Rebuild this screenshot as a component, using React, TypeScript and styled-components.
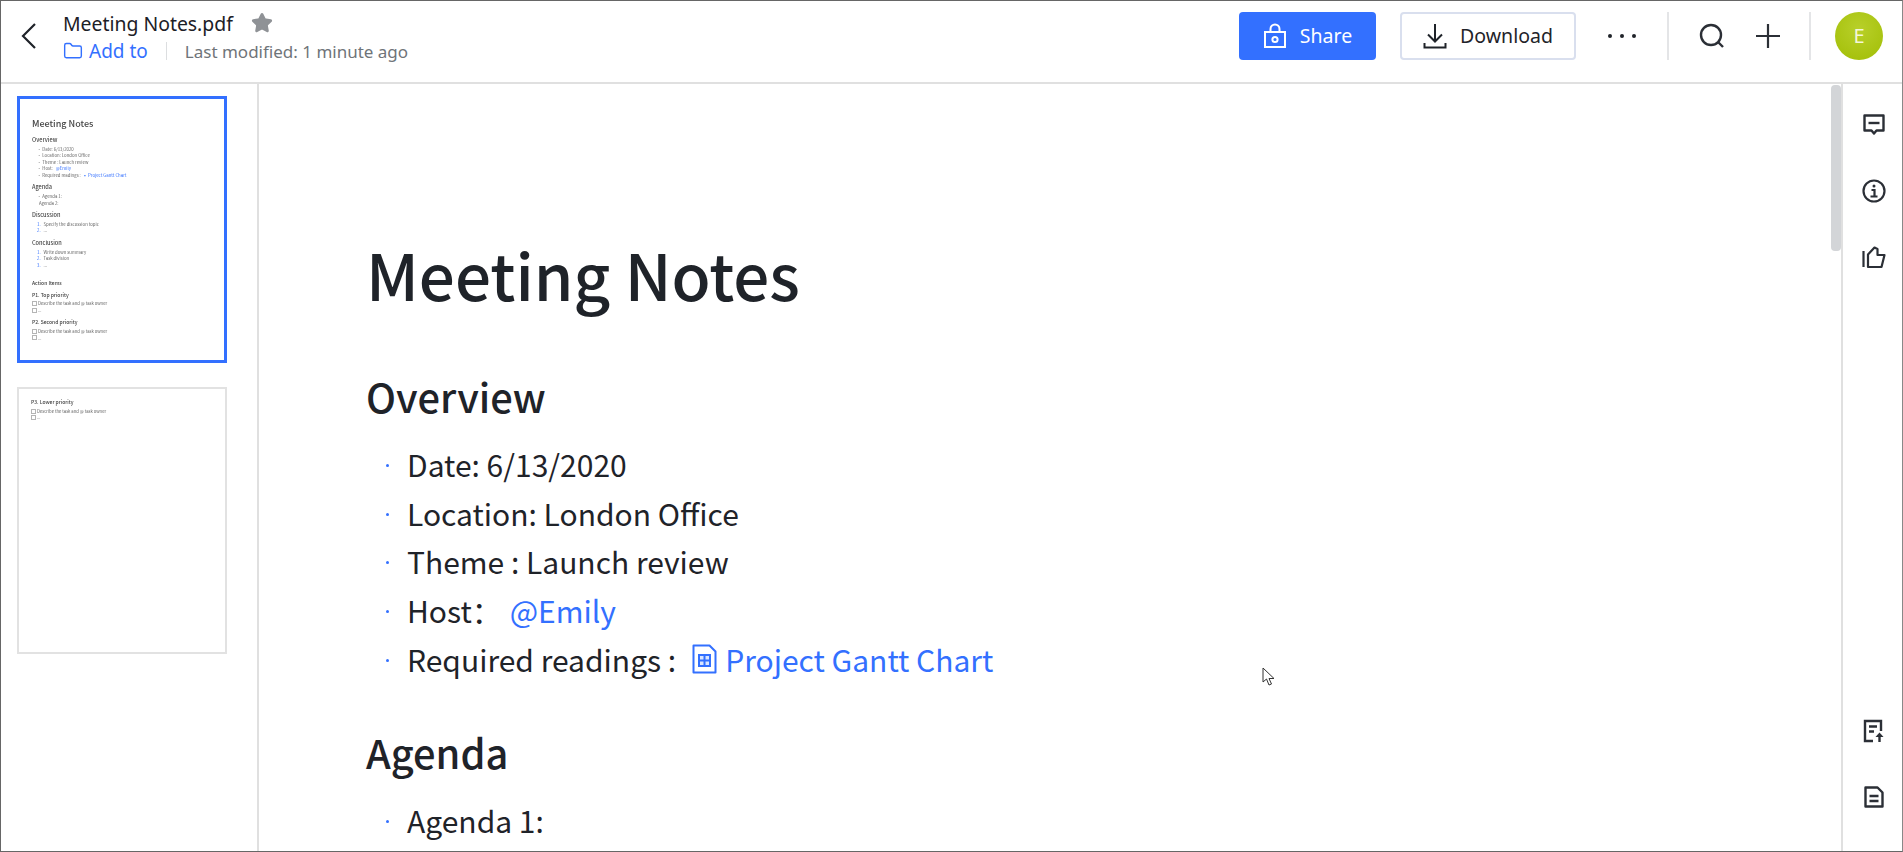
import styled, { createGlobalStyle } from 'styled-components';
import { Folder, Star } from 'lucide-react';

const GlobalStyle = createGlobalStyle`
  html, body {
    margin: 0;
    padding: 0;
    background: #fff;
  }
  * {
    box-sizing: border-box;
  }
`;

const DOC_FONT = `"Noto Sans CJK SC", "Noto Sans", sans-serif`;
const UI_FONT = `"Noto Sans", "Open Sans", sans-serif`;
const BLUE = '#3370ff';
const INK = '#1f2329';

const Frame = styled.div`
  width: 1903px;
  height: 852px;
  border: 1px solid #666;
  border-right-color: #888;
  display: flex;
  flex-direction: column;
  overflow: hidden;
  position: relative;
  font-family: ${UI_FONT};
  color: ${INK};
`;

const Header = styled.header`
  height: 83px;
  flex: none;
  border-bottom: 2px solid #e0e0e0;
  display: flex;
  align-items: center;
  justify-content: space-between;
  padding: 0 19px 12px 20px;
`;

const HeaderLeft = styled.div`
  display: flex;
  align-items: center;
`;

const HeaderRight = styled.div`
  display: flex;
  align-items: center;
`;

const BackButton = styled.div`
  width: 42px;
  display: flex;
  color: ${INK};
`;

const FileInfo = styled.div`
  display: flex;
  flex-direction: column;
  padding-top: 3px;
`;

const TitleRow = styled.div`
  display: flex;
  align-items: center;
  gap: 18px;
  height: 28px;
`;

const FileName = styled.span`
  font-size: 19.4px;
  color: #1c2026;
`;

const MetaRow = styled.div`
  display: flex;
  align-items: center;
  height: 28px;
`;

const AddTo = styled.span`
  display: flex;
  align-items: center;
  gap: 6px;
  color: ${BLUE};
  font-size: 19px;
  padding-right: 18px;
  border-right: 1px solid #dcdee0;
  height: 18px;
`;

const Modified = styled.span`
  font-size: 17px;
  color: #6f7479;
  margin-left: 18px;
`;

const ActionButton = styled.button<{ $primary?: boolean; $width: number }>`
  width: ${(p) => p.$width}px;
  height: 48px;
  border-radius: 4px;
  border: ${(p) => (p.$primary ? 'none' : '2px solid #d9dfee')};
  background: ${(p) => (p.$primary ? BLUE : '#fff')};
  color: ${(p) => (p.$primary ? '#fff' : INK)};
  font-family: ${UI_FONT};
  font-size: 19.5px;
  display: flex;
  align-items: center;
  justify-content: center;
  gap: 13px;
  padding: 0;
  margin-right: 24px;
`;

const Dots = styled.div`
  display: flex;
  gap: 8px;
  width: 67px;
  padding-left: 8px;
  span {
    width: 4px;
    height: 4px;
    border-radius: 50%;
    background: ${INK};
  }
`;

const Divider = styled.div<{ $after: number }>`
  width: 2px;
  height: 48px;
  background: #e4e5e7;
  margin-right: ${(p) => p.$after}px;
`;

const HeadIcon = styled.div<{ $after: number }>`
  display: flex;
  color: #2b2f36;
  margin-right: ${(p) => p.$after}px;
`;

const Avatar = styled.div`
  width: 48px;
  height: 48px;
  border-radius: 50%;
  background: radial-gradient(circle at 50% 35%, #b8d02a, #a7c20e 75%);
  color: #f4f7d8;
  font-size: 20px;
  display: flex;
  align-items: center;
  justify-content: center;
`;

const Body = styled.div`
  flex: 1;
  min-height: 0;
  display: flex;
`;

const Sidebar = styled.aside`
  width: 258px;
  flex: none;
  border-right: 2px solid #e0e0e0;
  padding: 12px 0 0 16px;
  display: flex;
  flex-direction: column;
  gap: 24px;
`;

const Thumb = styled.div<{ $active?: boolean }>`
  width: 210px;
  height: 267px;
  border: ${(p) => (p.$active ? `3px solid ${BLUE}` : '2px solid #e2e2e2')};
  padding: ${(p) => (p.$active ? '19px 0 0 12px' : '8px 0 0 12px')};
  font-family: ${DOC_FONT};
  color: #444;
  overflow: hidden;
  background: #fff;
`;

const ThumbPage = styled.div`
  filter: blur(0.35px);
`;

const ThumbTitle = styled.div`
  font-size: 9px;
  font-weight: 500;
  line-height: 12px;
  margin-bottom: 5px;
`;

const ThumbHeading = styled.div<{ $top?: number; $size?: number }>`
  font-size: ${(p) => p.$size ?? 5.6}px;
  font-weight: 500;
  line-height: 10px;
  margin-top: ${(p) => p.$top ?? 4.1}px;
  margin-bottom: 0.75px;
`;

const ThumbLine = styled.div<{ $check?: boolean }>`
  font-size: ${(p) => (p.$check ? 4.2 : 4.3)}px;
  height: 6.5px;
  line-height: 6.5px;
  padding-left: ${(p) => (p.$check ? 0 : 5)}px;
  white-space: pre;
  color: #666;
  display: flex;
  align-items: center;
  gap: 1px;
`;

const ThumbBox = styled.span`
  width: 5px;
  height: 5px;
  border: 1px solid #b5b5b5;
  flex: none;
`;

const ThumbLink = styled.span`
  color: ${BLUE};
`;

const Doc = styled.main`
  flex: 1;
  min-width: 0;
  padding: 147px 0 0 107px;
  font-family: ${DOC_FONT};
  color: ${INK};
  overflow: hidden;
`;

const H1 = styled.h1`
  margin: 0 0 51px;
  font-size: 63.7px;
  line-height: 84px;
  font-weight: 500;
`;

const H2 = styled.h2`
  margin: 0 0 14px;
  font-size: 39.8px;
  line-height: 60px;
  font-weight: 500;
`;

const Items = styled.ul`
  margin: 0 0 39px;
  padding: 0;
  list-style: none;
`;

const Item = styled.li`
  display: flex;
  align-items: center;
  height: 48.6px;
  font-size: 30px;
  padding-left: 20px;
  white-space: pre;
`;

const Dot = styled.span`
  width: 3px;
  height: 3px;
  border-radius: 50%;
  background: ${BLUE};
  margin: 3px 18px 0 0;
`;

const DocLink = styled.span<{ $left: number }>`
  color: ${BLUE};
  display: inline-flex;
  align-items: center;
  gap: 8px;
  margin-left: ${(p) => p.$left}px;
`;

const ScrollTrack = styled.div`
  width: 10px;
  flex: none;
  padding-top: 1px;
`;

const ScrollThumb = styled.div`
  height: 166px;
  border-radius: 4px;
  background: #d3d5d8;
`;

const Rail = styled.aside`
  width: 61px;
  flex: none;
  border-left: 2px solid #e0e0e0;
  display: flex;
  flex-direction: column;
  justify-content: space-between;
  align-items: center;
  padding: 29px 0 42px 2px;
  color: #2b2f36;
`;

const RailGroup = styled.div`
  display: flex;
  flex-direction: column;
  gap: 42px;
`;

const RailIcon = styled.div`
  width: 24px;
  height: 24px;
  display: flex;
  justify-content: center;
  align-items: center;
`;

const Pointer = styled.svg`
  position: absolute;
  left: 1261px;
  top: 666px;
`;

const BackIcon = () => (
  <svg width="15" height="26" viewBox="0 0 15 26" fill="none" stroke="currentColor" strokeWidth="2.2">
    <path d="M14 1L2 13l12 12" />
  </svg>
);

const ShareIcon = () => (
  <svg width="24" height="26" viewBox="0 0 24 26" fill="none" stroke="currentColor" strokeWidth="2">
    <rect x="2" y="9" width="20" height="15" />
    <path d="M7.5 9V6a4.5 4.5 0 0 1 9 0v3" />
    <circle cx="12" cy="16.5" r="2.6" />
  </svg>
);

const DownloadIcon = () => (
  <svg width="24" height="26" viewBox="0 0 24 26" fill="none" stroke="currentColor" strokeWidth="2">
    <path d="M12 1v17M5 11.5l7 7 7-7" />
    <path d="M1.5 20v4.5h21V20" />
  </svg>
);

const SearchIcon = () => (
  <svg width="26" height="26" viewBox="0 0 26 26" fill="none" stroke="currentColor" strokeWidth="2.4">
    <circle cx="12" cy="12" r="10" />
    <path d="M19.5 19.5l4.5 4.5" />
  </svg>
);

const PlusIcon = () => (
  <svg width="26" height="26" viewBox="0 0 26 26" fill="none" stroke="currentColor" strokeWidth="2.2">
    <path d="M1 13h24M13 1v24" />
  </svg>
);

const CommentIcon = () => (
  <svg width="22" height="22" viewBox="0 0 22 22" fill="none" stroke="currentColor" strokeWidth="2.4">
    <path d="M1.5 1.5h19v15h-7l-2.5 3-2.5-3h-7z" strokeLinejoin="round" />
    <path d="M5.5 9h11" />
  </svg>
);

const InfoIcon = () => (
  <svg width="24" height="24" viewBox="0 0 24 24" fill="none" stroke="currentColor" strokeWidth="2.2">
    <circle cx="12" cy="12" r="10.5" />
    <path d="M9.5 11h3v6.5M8.5 17.5h7" />
    <circle cx="12" cy="7" r="1.5" fill="currentColor" stroke="none" />
  </svg>
);

const ThumbIcon = () => (
  <svg width="24" height="24" viewBox="0 0 24 24" fill="none" stroke="currentColor" strokeWidth="2.2">
    <path d="M1.5 6v16" />
    <path d="M6 22V9.5L12.500 2.5 15.500 4v6H22.500L19.500 22z" strokeLinejoin="round" />
  </svg>
);

const UploadDocIcon = () => (
  <svg width="22" height="24" viewBox="0 0 22 24" fill="none" stroke="currentColor" strokeWidth="2.4">
    <path d="M10 22H2V2h16v10" />
    <path d="M6 7.5h8M6 12.5h5" />
    <path d="M16.5 23v-7" />
    <path d="M12.5 18l4-4.5 4 4.5z" fill="currentColor" stroke="none" />
  </svg>
);

const NoteIcon = () => (
  <svg width="20" height="22" viewBox="0 0 20 22" fill="none" stroke="currentColor" strokeWidth="2.4">
    <path d="M1.5 1.5h12l5 5v14h-17z" strokeLinejoin="round" />
    <path d="M5.5 10h9M5.5 15h9" />
  </svg>
);

const SheetIcon = () => (
  <svg width="25" height="30" viewBox="0 0 25 30" fill="none" stroke={BLUE} strokeWidth="2">
    <path d="M1.5 1.5h16l6 6v21h-22z" strokeLinejoin="round" />
    <rect x="7" y="11" width="11" height="11" fill="#d9e5ff" />
    <path d="M7 16.5h11M12.5 11v11" />
  </svg>
);

const App = () => (
  <Frame>
    <GlobalStyle />
    <Header>
      <HeaderLeft>
        <BackButton>
          <BackIcon />
        </BackButton>
        <FileInfo>
          <TitleRow>
            <FileName>Meeting Notes.pdf</FileName>
            <Star size={22} fill="#8f9296" color="#8f9296" />
          </TitleRow>
          <MetaRow>
            <AddTo>
              <Folder size={20} strokeWidth={1.7} />
              Add to
            </AddTo>
            <Modified>Last modified: 1 minute ago</Modified>
          </MetaRow>
        </FileInfo>
      </HeaderLeft>
      <HeaderRight>
        <ActionButton $primary $width={137}>
          <ShareIcon />
          Share
        </ActionButton>
        <ActionButton $width={176}>
          <DownloadIcon />
          Download
        </ActionButton>
        <Dots>
          <span />
          <span />
          <span />
        </Dots>
        <Divider $after={30} />
        <HeadIcon $after={30}>
          <SearchIcon />
        </HeadIcon>
        <HeadIcon $after={28}>
          <PlusIcon />
        </HeadIcon>
        <Divider $after={24} />
        <Avatar>E</Avatar>
      </HeaderRight>
    </Header>
    <Body>
      <Sidebar>
        <Thumb $active>
          <ThumbPage>
            <ThumbTitle>Meeting Notes</ThumbTitle>
            <ThumbHeading $top={0}>Overview</ThumbHeading>
            <ThumbLine>· Date: 6/13/2020</ThumbLine>
            <ThumbLine>· Location: London Office</ThumbLine>
            <ThumbLine>· Theme : Launch review</ThumbLine>
            <ThumbLine>· Host:  <ThumbLink>@Emily</ThumbLink></ThumbLine>
            <ThumbLine>· Required readings : <ThumbLink>▪ Project Gantt Chart</ThumbLink></ThumbLine>
            <ThumbHeading>Agenda</ThumbHeading>
            <ThumbLine>· Agenda 1:</ThumbLine>
            <ThumbLine>  Agenda 2:</ThumbLine>
            <ThumbHeading>Discussion</ThumbHeading>
            <ThumbLine><ThumbLink>1.</ThumbLink>  Specify the discussion topic</ThumbLine>
            <ThumbLine><ThumbLink>2.</ThumbLink>  ...</ThumbLine>
            <ThumbHeading>Conclusion</ThumbHeading>
            <ThumbLine><ThumbLink>1.</ThumbLink>  Write down summary</ThumbLine>
            <ThumbLine><ThumbLink>2.</ThumbLink>  Task division</ThumbLine>
            <ThumbLine><ThumbLink>3.</ThumbLink>  ...</ThumbLine>
            <ThumbHeading $top={10} $size={5}>Action Items</ThumbHeading>
            <ThumbHeading $top={1.25} $size={5}>P1. Top priority</ThumbHeading>
            <ThumbLine $check><ThumbBox />Describe the task and @ task owner</ThumbLine>
            <ThumbLine $check><ThumbBox />...</ThumbLine>
            <ThumbHeading $size={5}>P2. Second priority</ThumbHeading>
            <ThumbLine $check><ThumbBox />Describe the task and @ task owner</ThumbLine>
            <ThumbLine $check><ThumbBox />...</ThumbLine>
          </ThumbPage>
        </Thumb>
        <Thumb>
          <ThumbPage>
            <ThumbHeading $top={0} $size={5}>P3. Lower priority</ThumbHeading>
            <ThumbLine $check><ThumbBox />Describe the task and @ task owner</ThumbLine>
            <ThumbLine $check><ThumbBox />...</ThumbLine>
          </ThumbPage>
        </Thumb>
      </Sidebar>
      <Doc>
        <H1>Meeting Notes</H1>
        <H2>Overview</H2>
        <Items>
          <Item><Dot />Date: 6/13/2020</Item>
          <Item><Dot />Location: London Office</Item>
          <Item><Dot />Theme : Launch review</Item>
          <Item><Dot />Host：<DocLink $left={8}>@Emily</DocLink></Item>
          <Item><Dot />Required readings :<DocLink $left={16}><SheetIcon />Project Gantt Chart</DocLink></Item>
        </Items>
        <H2>Agenda</H2>
        <Items>
          <Item><Dot />Agenda 1:</Item>
        </Items>
      </Doc>
      <ScrollTrack>
        <ScrollThumb />
      </ScrollTrack>
      <Rail>
        <RailGroup>
          <RailIcon><CommentIcon /></RailIcon>
          <RailIcon><InfoIcon /></RailIcon>
          <RailIcon><ThumbIcon /></RailIcon>
        </RailGroup>
        <RailGroup>
          <RailIcon><UploadDocIcon /></RailIcon>
          <RailIcon><NoteIcon /></RailIcon>
        </RailGroup>
      </Rail>
    </Body>
    <Pointer width="14" height="20" viewBox="0 0 14 20">
      <path d="M1 1v14l3.5-3 2.5 6 2.5-1-2.5-5.5H12z" fill="#fff" stroke="#333" strokeWidth="1" />
    </Pointer>
  </Frame>
);

export default App;
